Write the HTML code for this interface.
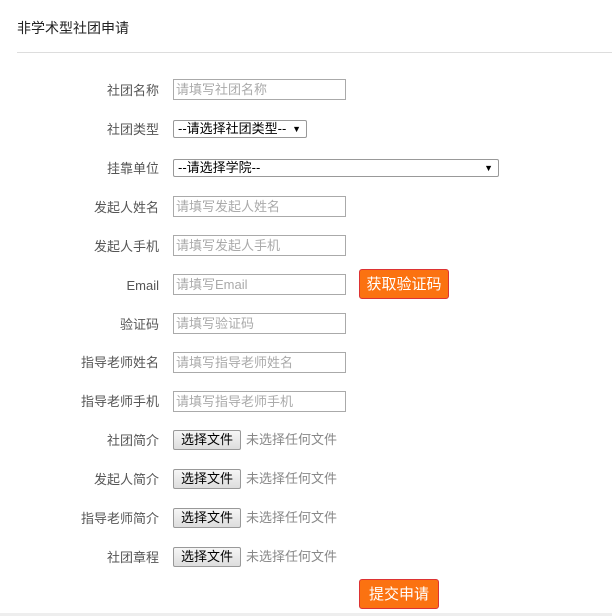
<!DOCTYPE html>
<html><head><meta charset="utf-8"><style>
body{margin:0;width:612px;height:616px;background:#fff;font-family:"Liberation Sans","Noto Sans CJK SC",sans-serif;position:relative;overflow:hidden}
.t{position:absolute;left:17px;top:18px;font-size:14px;color:#222}
.hr{position:absolute;left:17px;right:0;top:52px;border-top:1px solid #ddd}
.lab{position:absolute;right:453px;font-size:13px;color:#555;white-space:nowrap;line-height:18px;height:18px;margin-top:2px}
.in{position:absolute;left:173px;font-size:13px;color:#aaa;line-height:19px;padding-left:2px;box-sizing:border-box;width:173px;height:21px;border:1px solid #aaa}
.sel{position:absolute;left:173px;height:18px;border:1px solid #999;border-radius:2px;font-size:13px;color:#000;line-height:16px;padding-left:4px;box-sizing:border-box}
.sel i{position:absolute;right:5px;top:0;font-style:normal;font-size:9px}
.fb{position:absolute;left:173px;width:68px;height:20px;border:1px solid #999;border-radius:2px;background:linear-gradient(#f6f6f6,#ddd);box-sizing:border-box;font-size:13px;text-align:center;line-height:18px;color:#000}
.ft{position:absolute;left:246px;font-size:13px;color:#888;line-height:18px;margin-top:1px}
.ob{position:absolute;background:#fb7211;border:1px solid #d33;border-radius:3px;color:#fff;font-size:15px;text-align:center;box-sizing:border-box}
</style></head><body>
<div class="t">非学术型社团申请</div>
<div class="hr"></div>

<div class="lab" style="top:80px">社团名称</div><div class="in" style="top:79px">请填写社团名称</div>
<div class="lab" style="top:119px">社团类型</div><div class="sel" style="top:120px;width:134px">--请选择社团类型--<i>▼</i></div>
<div class="lab" style="top:158px">挂靠单位</div><div class="sel" style="top:159px;width:326px">--请选择学院--<i>▼</i></div>
<div class="lab" style="top:197px">发起人姓名</div><div class="in" style="top:196px">请填写发起人姓名</div>
<div class="lab" style="top:236px">发起人手机</div><div class="in" style="top:235px">请填写发起人手机</div>
<div class="lab" style="top:275px">Email</div><div class="in" style="top:274px">请填写Email</div>
<div class="ob" style="left:359px;top:269px;width:90px;height:30px;line-height:29px">获取验证码</div>
<div class="lab" style="top:314px">验证码</div><div class="in" style="top:313px">请填写验证码</div>
<div class="lab" style="top:352px">指导老师姓名</div><div class="in" style="top:352px">请填写指导老师姓名</div>
<div class="lab" style="top:391px">指导老师手机</div><div class="in" style="top:391px">请填写指导老师手机</div>
<div class="lab" style="top:430px">社团简介</div><div class="fb" style="top:430px">选择文件</div><div class="ft" style="top:430px">未选择任何文件</div>
<div class="lab" style="top:469px">发起人简介</div><div class="fb" style="top:469px">选择文件</div><div class="ft" style="top:469px">未选择任何文件</div>
<div class="lab" style="top:508px">指导老师简介</div><div class="fb" style="top:508px">选择文件</div><div class="ft" style="top:508px">未选择任何文件</div>
<div class="lab" style="top:547px">社团章程</div><div class="fb" style="top:547px">选择文件</div><div class="ft" style="top:547px">未选择任何文件</div>
<div class="ob" style="left:359px;top:579px;width:80px;height:30px;line-height:29px">提交申请</div>
<div style="position:absolute;left:0;right:0;top:613px;height:3px;background:#eee"></div>
</body></html>
